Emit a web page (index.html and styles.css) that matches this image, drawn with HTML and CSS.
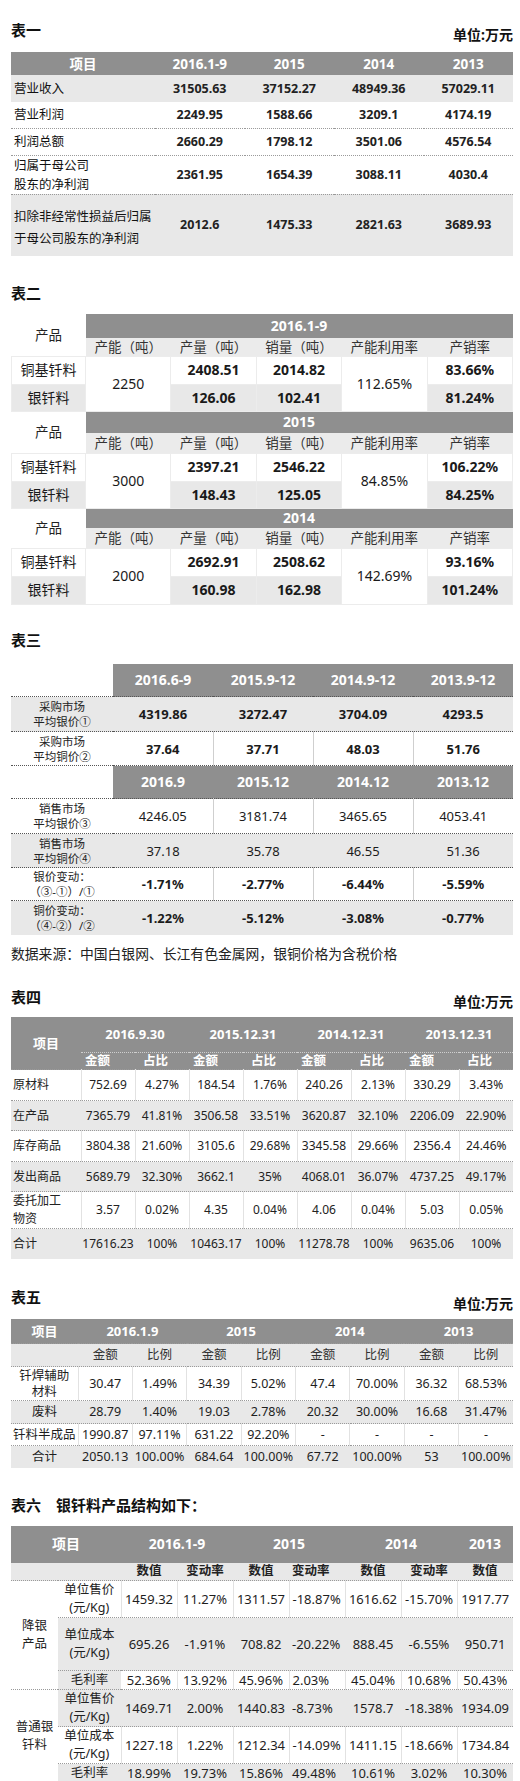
FILE: index.html
```html
<!DOCTYPE html>
<html lang="zh-CN">
<head>
<meta charset="utf-8">
<title>表格</title>
<link rel="stylesheet" href="styles.css">
</head>
<body>
<div class="page">

<div class="cap cap1"><span class="t">表一</span><span class="u">单位:万元</span></div>
<table class="tb t1">
<colgroup><col class="c1"><col><col><col><col></colgroup>
<tr class="hd h23"><th>项目</th><th>2016.1-9</th><th>2015</th><th>2014</th><th>2013</th></tr>
<tr class="g h27"><td class="lab">营业收入</td><td>31505.63</td><td>37152.27</td><td>48949.36</td><td>57029.11</td></tr>
<tr class="h26"><td class="lab">营业利润</td><td>2249.95</td><td>1588.66</td><td>3209.1</td><td>4174.19</td></tr>
<tr class="dt h27"><td class="lab">利润总额</td><td>2660.29</td><td>1798.12</td><td>3501.06</td><td>4576.54</td></tr>
<tr class="dt h38"><td class="lab two">归属于母公司<br>股东的净利润</td><td>2361.95</td><td>1654.39</td><td>3088.11</td><td>4030.4</td></tr>
<tr class="dt g h62"><td class="lab two22">扣除非经常性损益后归属<br>于母公司股东的净利润</td><td>2012.6</td><td>1475.33</td><td>2821.63</td><td>3689.93</td></tr>
</table>

<div class="cap cap2"><span class="t">表二</span></div>
<table class="tb t2">
<colgroup><col class="c1"><col><col><col><col><col></colgroup>
<tr class="h24"><td rowspan="2" class="prod">产品</td><th colspan="5" class="gh">2016.1-9</th></tr>
<tr class="h18 sub"><td>产能（吨）</td><td>产量（吨）</td><td>销量（吨）</td><td>产能利用率</td><td>产销率</td></tr>
<tr class="h28 dat"><td class="nm">铜基钎料</td><td rowspan="2" class="nm">2250</td><td>2408.51</td><td>2014.82</td><td rowspan="2" class="nm">112.65%</td><td>83.66%</td></tr>
<tr class="h27 dat g"><td class="nm">银钎料</td><td>126.06</td><td>102.41</td><td>81.24%</td></tr>

<tr class="h22"><td rowspan="2" class="prod">产品</td><th colspan="5" class="gh">2015</th></tr>
<tr class="h20 sub"><td>产能（吨）</td><td>产量（吨）</td><td>销量（吨）</td><td>产能利用率</td><td>产销率</td></tr>
<tr class="h28 dat"><td class="nm">铜基钎料</td><td rowspan="2" class="nm">3000</td><td>2397.21</td><td>2546.22</td><td rowspan="2" class="nm">84.85%</td><td>106.22%</td></tr>
<tr class="h27 dat g"><td class="nm">银钎料</td><td>148.43</td><td>125.05</td><td>84.25%</td></tr>

<tr class="h20"><td rowspan="2" class="prod">产品</td><th colspan="5" class="gh">2014</th></tr>
<tr class="h20 sub"><td>产能（吨）</td><td>产量（吨）</td><td>销量（吨）</td><td>产能利用率</td><td>产销率</td></tr>
<tr class="h28 dat"><td class="nm">铜基钎料</td><td rowspan="2" class="nm">2000</td><td>2692.91</td><td>2508.62</td><td rowspan="2" class="nm">142.69%</td><td>93.16%</td></tr>
<tr class="h28 dat g"><td class="nm">银钎料</td><td>160.98</td><td>162.98</td><td>101.24%</td></tr>
</table>

<div class="cap cap3"><span class="t">表三</span></div>
<table class="tb t3">
<colgroup><col class="c1"><col><col><col><col></colgroup>
<tr class="h33"><td class="blank"></td><th class="gh">2016.6-9</th><th class="gh">2015.9-12</th><th class="gh">2014.9-12</th><th class="gh">2013.9-12</th></tr>
<tr class="h35 g dd b"><td class="lab3">采购市场<br>平均银价①</td><td>4319.86</td><td>3272.47</td><td>3704.09</td><td>4293.5</td></tr>
<tr class="h34 dd b vl"><td class="lab3">采购市场<br>平均铜价②</td><td>37.64</td><td>37.71</td><td>48.03</td><td>51.76</td></tr>
<tr class="h33 dd"><td class="blank"></td><th class="gh">2016.9</th><th class="gh">2015.12</th><th class="gh">2014.12</th><th class="gh">2013.12</th></tr>
<tr class="h35 dd vl"><td class="lab3">销售市场<br>平均银价③</td><td>4246.05</td><td>3181.74</td><td>3465.65</td><td>4053.41</td></tr>
<tr class="h34 g dd"><td class="lab3">销售市场<br>平均铜价④</td><td>37.18</td><td>35.78</td><td>46.55</td><td>51.36</td></tr>
<tr class="h33 dd b vl"><td class="lab3">银价变动：<br>（③-①）/①</td><td>-1.71%</td><td>-2.77%</td><td>-6.44%</td><td>-5.59%</td></tr>
<tr class="h34 g dd b"><td class="lab3">铜价变动：<br>（④-②）/②</td><td>-1.22%</td><td>-5.12%</td><td>-3.08%</td><td>-0.77%</td></tr>
</table>
<p class="src">数据来源：中国白银网、长江有色金属网，银铜价格为含税价格</p>

<div class="cap cap4"><span class="t">表四</span><span class="u">单位:万元</span></div>
<table class="tb t4">
<colgroup><col class="c1"><col><col><col><col><col><col><col><col></colgroup>
<tr class="hd h36"><th rowspan="2">项目</th><th colspan="2">2016.9.30</th><th colspan="2">2015.12.31</th><th colspan="2">2014.12.31</th><th colspan="2">2013.12.31</th></tr>
<tr class="hd h17 hs"><th class="l5">金额</th><th class="l8">占比</th><th class="l5">金额</th><th class="l8">占比</th><th class="l5">金额</th><th class="l8">占比</th><th class="l5">金额</th><th class="l8">占比</th></tr>
<tr class="h31 dd vl"><td class="lab4">原材料</td><td>752.69</td><td>4.27%</td><td>184.54</td><td>1.76%</td><td>240.26</td><td>2.13%</td><td>330.29</td><td>3.43%</td></tr>
<tr class="h30 dd g"><td class="lab4">在产品</td><td>7365.79</td><td>41.81%</td><td>3506.58</td><td>33.51%</td><td>3620.87</td><td>32.10%</td><td>2206.09</td><td>22.90%</td></tr>
<tr class="h31 dd vl"><td class="lab4">库存商品</td><td>3804.38</td><td>21.60%</td><td>3105.6</td><td>29.68%</td><td>3345.58</td><td>29.66%</td><td>2356.4</td><td>24.46%</td></tr>
<tr class="h30 dd g"><td class="lab4">发出商品</td><td>5689.79</td><td>32.30%</td><td>3662.1</td><td>35%</td><td>4068.01</td><td>36.07%</td><td>4737.25</td><td>49.17%</td></tr>
<tr class="h31 dd vl"><td class="lab4 two18">委托加工<br>物资</td><td>3.57</td><td>0.02%</td><td>4.35</td><td>0.04%</td><td>4.06</td><td>0.04%</td><td>5.03</td><td>0.05%</td></tr>
<tr class="h30 dd g"><td class="lab4">合计</td><td>17616.23</td><td>100%</td><td>10463.17</td><td>100%</td><td>11278.78</td><td>100%</td><td>9635.06</td><td>100%</td></tr>
</table>

<div class="cap cap5"><span class="t">表五</span><span class="u">单位:万元</span></div>
<table class="tb t5">
<colgroup><col class="c1"><col><col><col><col><col><col><col><col></colgroup>
<tr class="hd h25"><th>项目</th><th colspan="2">2016.1.9</th><th colspan="2">2015</th><th colspan="2">2014</th><th colspan="2">2013</th></tr>
<tr class="h23 g dd sub5"><td></td><td>金额</td><td>比例</td><td>金额</td><td>比例</td><td>金额</td><td>比例</td><td>金额</td><td>比例</td></tr>
<tr class="h34 dd vl"><td class="lab5 two16">钎焊辅助<br>材料</td><td>30.47</td><td>1.49%</td><td>34.39</td><td>5.02%</td><td>47.4</td><td>70.00%</td><td>36.32</td><td>68.53%</td></tr>
<tr class="h23 dd g"><td class="lab5">废料</td><td>28.79</td><td>1.40%</td><td>19.03</td><td>2.78%</td><td>20.32</td><td>30.00%</td><td>16.68</td><td>31.47%</td></tr>
<tr class="h22 dd vl"><td class="lab5">钎料半成品</td><td>1990.87</td><td>97.11%</td><td>631.22</td><td>92.20%</td><td>-</td><td>-</td><td>-</td><td>-</td></tr>
<tr class="h22 dd g"><td class="lab5">合计</td><td>2050.13</td><td>100.00%</td><td>684.64</td><td>100.00%</td><td>67.72</td><td>100.00%</td><td>53</td><td>100.00%</td></tr>
</table>

<div class="cap cap6"><span class="t">表六　银钎料产品结构如下：</span></div>
<table class="tb t6">
<colgroup><col class="c1"><col class="c2"><col><col><col><col><col><col><col></colgroup>
<tr class="hd h37"><th colspan="2">项目</th><th colspan="2">2016.1-9</th><th colspan="2">2015</th><th colspan="2">2014</th><th>2013</th></tr>
<tr class="h18 g sub6"><td colspan="2"></td><td>数值</td><td>变动率</td><td>数值</td><td class="l">变动率</td><td>数值</td><td>变动率</td><td>数值</td></tr>
<tr class="h36 dd vl"><td rowspan="3" class="grp">降银<br>产品</td><td class="lab6">单位售价<br>(元/Kg)</td><td>1459.32</td><td>11.27%</td><td>1311.57</td><td class="l">-18.87%</td><td>1616.62</td><td>-15.70%</td><td>1917.77</td></tr>
<tr class="h53 dd g"><td class="lab6">单位成本<br>(元/Kg)</td><td>695.26</td><td>-1.91%</td><td>708.82</td><td class="l">-20.22%</td><td>888.45</td><td>-6.55%</td><td>950.71</td></tr>
<tr class="h18 dd vl"><td class="lab6 gc">毛利率</td><td>52.36%</td><td>13.92%</td><td>45.96%</td><td class="l">2.03%</td><td>45.04%</td><td>10.68%</td><td>50.43%</td></tr>
<tr class="h35 dd g"><td rowspan="3" class="grp wb">普通银<br>钎料</td><td class="lab6">单位售价<br>(元/Kg)</td><td>1469.71</td><td>2.00%</td><td>1440.83</td><td class="l">-8.73%</td><td>1578.7</td><td>-18.38%</td><td>1934.09</td></tr>
<tr class="h36 dd vl"><td class="lab6">单位成本<br>(元/Kg)</td><td>1227.18</td><td>1.22%</td><td>1212.34</td><td class="l">-14.09%</td><td>1411.15</td><td>-18.66%</td><td>1734.84</td></tr>
<tr class="h18 dd g"><td class="lab6">毛利率</td><td>18.99%</td><td>19.73%</td><td>15.86%</td><td class="l">49.48%</td><td>10.61%</td><td>3.02%</td><td>10.30%</td></tr>
</table>

</div>
</body>
</html>
```

FILE: styles.css
```css
* { box-sizing: border-box; }
html, body { background: #fff; }
body {
  margin: 0;
  color: #1b1b1b;
  font-family: "Noto Sans", "Noto Sans CJK SC", sans-serif;
}
.page { width: 502px; margin-left: 11px; padding-bottom: 14px; }

/* captions */
.cap { display: flex; justify-content: space-between; align-items: flex-start; }
.cap .t { font-size: 15px; font-weight: bold; line-height: 20px; color: #111; }
.cap .u { font-size: 14px; font-weight: bold; line-height: 20px; margin-top: 5px; color: #111; }
.cap1 { padding-top: 20px; height: 52px; }
.cap2 { margin-top: 27px; height: 31px; }
.cap3 { margin-top: 25px; height: 34px; }
.cap4 { margin-top: 23px; height: 30px; }
.cap5 { margin-top: 28px; height: 32px; }
.cap5 .u { margin-top: 7px; }
.cap6 { margin-top: 27px; height: 31px; }

.src {
  margin: 0; padding-top: 9px;
  font-size: 13.8px; line-height: 20px; color: #222;
}

/* tables */
.tb { width: 502px; border-collapse: collapse; table-layout: fixed; }
.tb td, .tb th { padding: 0; text-align: center; vertical-align: middle; line-height: 16px; }
.hd th, .tb th.gh { background: #8f8f8f; color: #fff; font-weight: bold; }
.g td { background: #e8e8e8; }
.dt td, .dd td, .dd th { border-top: 1px dotted #9a9a9a; }
.vl td + td { border-left: 1px solid #e2e2e2; }

.h17 { height: 17px; } .h18 { height: 18px; } .h20 { height: 20px; }
.h22 { height: 22px; } .h23 { height: 23px; } .h24 { height: 24px; }
.h25 { height: 25px; } .h26 { height: 26px; } .h27 { height: 27px; }
.h28 { height: 28px; } .h30 { height: 30px; } .h31 { height: 31px; }
.h33 { height: 33px; } .h34 { height: 34px; } .h35 { height: 35px; }
.h36 { height: 36px; } .h37 { height: 37px; } .h38 { height: 38px; }
.h53 { height: 53px; } .h62 { height: 62px; }

/* table 1 */
.t1 { font-size: 12.5px; }
.t1 col.c1 { width: 144px; }
.t1 th { font-size: 13.5px; }
.t1 td { font-weight: bold; color: #222; }
.t1 td.lab { text-align: left; padding-left: 3px; font-weight: normal; color: #111; }
.t1 td.two { line-height: 19px; }
.t1 td.two22 { line-height: 22px; padding-top: 6px; }

/* table 2 */
.t2 { font-size: 14px; }
.t2 col.c1 { width: 74px; }
.t2 th { font-size: 14px; }
.t2 .prod { background: #fff; color: #222; font-size: 13.5px; }
.t2 .sub td { background: #ebebeb; color: #333; font-size: 13.5px; }
.t2 .dat td { font-weight: bold; color: #1a1a1a; border: 1px solid #ececec; }
.t2 .dat td.nm { font-weight: normal; }

/* table 3 */
.t3 { font-size: 13px; }
.t3 col.c1 { width: 102px; }
.t3 th { font-size: 14px; }
.t3 .dd td, .t3 .dd th { border-top: 1px dotted #555; }
.t3 td.blank { background: #fff; }
.t3 td.lab3 { font-size: 11.5px; line-height: 15px; font-weight: normal; color: #222; }
.t3 .b td { font-weight: bold; }
.t3 .b td.lab3 { font-weight: normal; }
.t3 .vl td + td { border-left: none; }
.t3 .vl td + td + td { border-left: 1px solid #cfcfcf; }

/* table 4 */
.t4 { font-size: 12px; }
.t4 col.c1 { width: 70px; }
.t4 th { font-size: 13px; }
.t4 .hs th { font-size: 12.5px; text-align: left; border-top: 1px dotted #cfcfcf; line-height: 14px; }
.t4 .hs th.l5 { padding-left: 4px; }
.t4 .hs th.l8 { padding-left: 8px; }
.t4 td { color: #222; }
.t4 td.lab4 { text-align: left; padding-left: 2px; font-size: 12px; }
.t4 td.two18 { line-height: 18px; }

/* table 5 */
.t5 { font-size: 12.5px; }
.t5 col.c1 { width: 67px; }
.t5 th { font-size: 13px; }
.t5 .sub5 td { color: #333; }
.t5 td { color: #1e1e1e; }
.t5 td.two16 { line-height: 16px; }

/* table 6 */
.t6 { font-size: 13px; }
.t6 col.c1 { width: 47px; }
.t6 col.c2 { width: 63px; }
.t6 th { font-size: 14px; }
.t6 .sub6 td { color: #222; font-weight: bold; font-size: 12.5px; }
.t6 td { color: #1e1e1e; }
.t6 td.l { text-align: left; padding-left: 3px; }
.t6 td.grp { background: #fff; font-size: 12.5px; line-height: 18px; color: #222; }
.t6 td.lab6 { font-size: 12.5px; line-height: 18px; color: #222; }
.t6 td.gc { background: #e8e8e8; }
.t6 .vl td.grp + td { border-left: none; }
.t6 .vl td.gc + td { border-left: none; }
```
